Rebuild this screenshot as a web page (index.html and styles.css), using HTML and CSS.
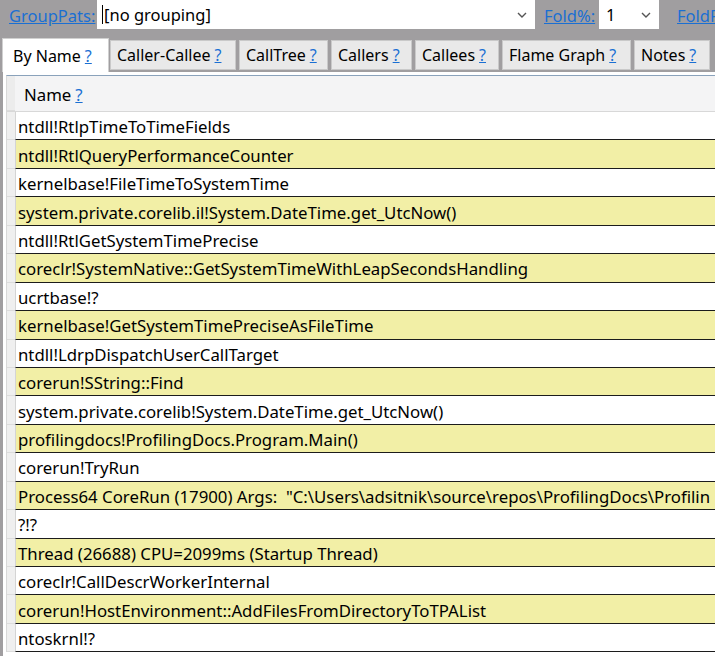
FILE: index.html
```html
<!DOCTYPE html>
<html>
<head>
<meta charset="utf-8">
<link rel="stylesheet" href="styles.css">
</head>
<body>
<div class="toolbar">
  <a class="link lbl-group" href="#">GroupPats:</a>
  <div class="combo combo-group"><span class="caret-bar"></span><span class="combo-text">[no grouping]</span><svg class="chev" width="10" height="6" viewBox="0 0 10 6"><path d="M1 1l4 4 4-4" fill="none" stroke="#555" stroke-width="1.4"/></svg></div>
  <a class="link lbl-fold" href="#">Fold%:</a>
  <div class="combo combo-fold"><span class="combo-text">1</span><svg class="chev" width="10" height="6" viewBox="0 0 10 6"><path d="M1 1l4 4 4-4" fill="none" stroke="#555" stroke-width="1.4"/></svg></div>
  <a class="link lbl-foldp" href="#">FoldPats:</a>
</div>
<div class="tabs">
  <div class="tab active">By Name <a class="q" href="#">?</a></div>
  <div class="tab t-cc">Caller-Callee <a class="q" href="#">?</a></div>
  <div class="tab t-ct">CallTree <a class="q" href="#">?</a></div>
  <div class="tab t-cr">Callers <a class="q" href="#">?</a></div>
  <div class="tab t-ce">Callees <a class="q" href="#">?</a></div>
  <div class="tab t-fg">Flame Graph <a class="q" href="#">?</a></div>
  <div class="tab t-no">Notes <a class="q" href="#">?</a></div>
</div>
<div class="content">
  <div class="grid">
    <div class="hdr"><div class="rh"></div><div class="hcell">Name <a class="q" href="#">?</a></div></div>
    <div class="row"><div class="rh"></div><div class="cell">ntdll!RtlpTimeToTimeFields</div></div>
    <div class="row y"><div class="rh"></div><div class="cell">ntdll!RtlQueryPerformanceCounter</div></div>
    <div class="row"><div class="rh"></div><div class="cell">kernelbase!FileTimeToSystemTime</div></div>
    <div class="row y"><div class="rh"></div><div class="cell">system.private.corelib.il!System.DateTime.get_UtcNow()</div></div>
    <div class="row"><div class="rh"></div><div class="cell">ntdll!RtlGetSystemTimePrecise</div></div>
    <div class="row y"><div class="rh"></div><div class="cell">coreclr!SystemNative::GetSystemTimeWithLeapSecondsHandling</div></div>
    <div class="row"><div class="rh"></div><div class="cell">ucrtbase!?</div></div>
    <div class="row y"><div class="rh"></div><div class="cell">kernelbase!GetSystemTimePreciseAsFileTime</div></div>
    <div class="row"><div class="rh"></div><div class="cell">ntdll!LdrpDispatchUserCallTarget</div></div>
    <div class="row y"><div class="rh"></div><div class="cell">corerun!SString::Find</div></div>
    <div class="row"><div class="rh"></div><div class="cell">system.private.corelib!System.DateTime.get_UtcNow()</div></div>
    <div class="row y"><div class="rh"></div><div class="cell">profilingdocs!ProfilingDocs.Program.Main()</div></div>
    <div class="row"><div class="rh"></div><div class="cell">corerun!TryRun</div></div>
    <div class="row y"><div class="rh"></div><div class="cell">Process64 CoreRun (17900) Args:&nbsp; "C:\Users\adsitnik\source\repos\ProfilingDocs\Profilin</div></div>
    <div class="row"><div class="rh"></div><div class="cell">?!?</div></div>
    <div class="row y"><div class="rh"></div><div class="cell">Thread (26688) CPU=2099ms (Startup Thread)</div></div>
    <div class="row"><div class="rh"></div><div class="cell">coreclr!CallDescrWorkerInternal</div></div>
    <div class="row y"><div class="rh"></div><div class="cell">corerun!HostEnvironment::AddFilesFromDirectoryToTPAList</div></div>
    <div class="row"><div class="rh"></div><div class="cell">ntoskrnl!?</div></div>
  </div>
</div>
</body>
</html>
```
FILE: styles.css
```css
html, body {
  margin: 0;
  padding: 0;
  background: #a09ea0;
  font-family: "Noto Sans", "Open Sans", sans-serif;
  font-size: 16px;
  color: #000;
  overflow: hidden;
}
.toolbar {
  display: flex;
  align-items: center;
  height: 30px;
  white-space: nowrap;
  overflow: hidden;
  font-size: 16.5px;
}
.toolbar > * { flex: none; }
.link {
  color: #1a6fd3;
  text-decoration: underline;
}
.lbl-group { margin-left: 9px; width: 88px; }
.combo {
  background: #fff;
  height: 29px;
  align-self: flex-start;
  display: flex;
  align-items: center;
  box-sizing: border-box;
}
.combo-group { width: 438px; padding-left: 5px; }
.caret-bar {
  width: 1px;
  height: 19px;
  background: #000;
  margin-right: 1px;
}
.combo-text { flex: 1; }
.chev { margin-right: 8px; }
.lbl-fold { margin-left: 9px; width: 55px; }
.combo-fold { width: 60px; padding-left: 7px; }
.lbl-foldp { margin-left: 18px; }
.tabs {
  display: flex;
  align-items: flex-end;
  height: 42px;
  padding-left: 2px;
  white-space: nowrap;
}
.tab {
  box-sizing: border-box;
  height: 30px;
  margin-bottom: 2px;
  background: #e9e9e9;
  border: 1px solid #c9c9c9;
  padding: 0 5px 0 6px;
  display: flex;
  align-items: center;
  margin-right: 3px;
  overflow: hidden;
  flex: none;
}
.tab.active {
  height: 34px;
  margin-bottom: 0;
  background: #fff;
  border-color: #d0d0d0;
  border-bottom: none;
  padding: 0 10px;
  margin-right: 1px;
  width: 107px;
}
.t-cc { width: 126px; }
.t-ct { width: 89px; }
.t-cr { width: 81px; }
.t-ce { width: 84px; }
.t-fg { width: 129px; }
.t-no { width: 76px; }
.q {
  color: #1a6fd3;
  text-decoration: underline;
  margin-left: 4px;
}
.content {
  margin-left: 3px;
  background: #fff;
  padding: 3px 0 0 3px;
  height: 584px;
}
.grid {
  border-top: 1px solid #8aa2bb;
  border-left: 1px solid #d8d8d8;
  background: #fff;
  font-size: 16.8px;
}
.hdr {
  display: flex;
  height: 35px;
  background: #f4f4f5;
  border-bottom: 1px solid #d8d8d8;
}
.hdr .rh { background: #ececec; }
.hcell {
  display: flex;
  align-items: center;
  padding-left: 9px;
  padding-top: 1px;
}
.row {
  display: flex;
  height: 28.44px;
  box-sizing: border-box;
}
.rh {
  width: 8px;
  flex: none;
  background: #efefef;
  border-bottom: 1px solid #dcdcdc;
  box-sizing: border-box;
}
.cell {
  flex: 1;
  min-width: 0;
  white-space: nowrap;
  overflow: hidden;
  box-sizing: border-box;
  border-bottom: 1.4px solid #1c1c1c;
  border-left: 1px solid #d4d4d4;
  padding-left: 2px;
  padding-top: 2px;
  display: flex;
  align-items: center;
}
.row.y .cell { background: #f2efa6; }
```
